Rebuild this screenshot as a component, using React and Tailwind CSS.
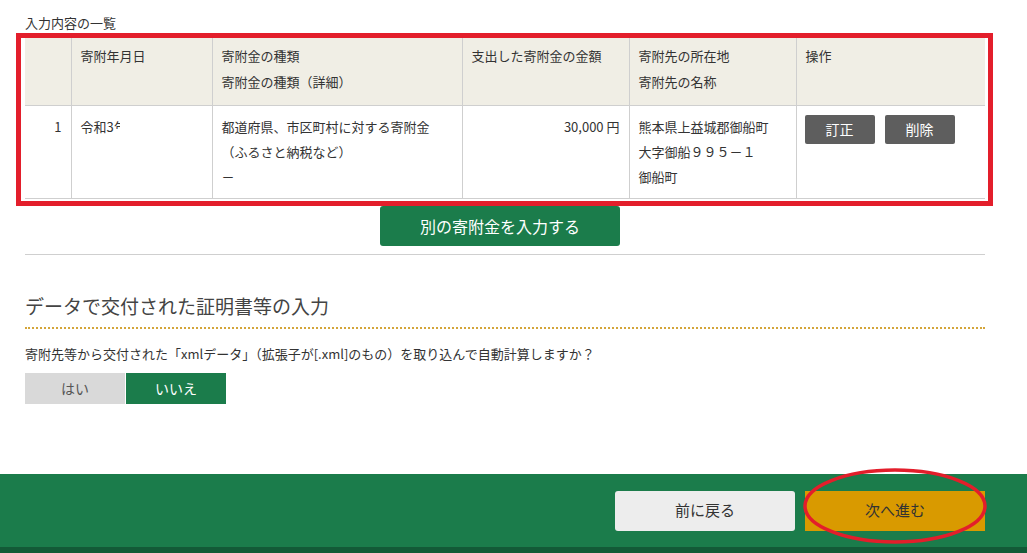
import React from 'react';

const font = { fontFamily: '"Noto Sans CJK JP", "Noto Sans", sans-serif' };

const cols = ['w-[46px]', 'w-[141px]', 'w-[250px]', 'w-[167px]', 'w-[167px]', 'w-[189px]'];

function HeaderCell({ className = '', children }) {
  return (
    <th className={`border-l border-[#cfcfcf] first:border-l-0 px-[9px] pt-[6px] pb-[10px] text-left align-top font-normal leading-[26px] ${className}`}>
      {children}
    </th>
  );
}

function Cell({ className = '', children }) {
  return (
    <td className={`border-l border-[#cfcfcf] first:border-l-0 px-[9px] pt-[8px] pb-[9px] align-top leading-[25px] ${className}`}>
      {children}
    </td>
  );
}

export default function App() {
  return (
    <div style={font} className="w-[1027px] h-[553px] bg-white text-[#333] overflow-hidden flex flex-col">
      <div className="px-[25px] w-[1010px]">
        <p className="pt-[14px] text-[13px] leading-[18px] text-[#333]">入力内容の一覧</p>

        <div className="relative mt-[5px] w-[960px]">
          <table className="w-[960px] table-fixed border-collapse text-[13px]">
            <colgroup>
              {cols.map((c, i) => (
                <col key={i} className={c} />
              ))}
            </colgroup>
            <thead>
              <tr className="bg-[#f0eee5] h-[68px] border-b border-[#cfcfcf]">
                <HeaderCell />
                <HeaderCell>寄附年月日</HeaderCell>
                <HeaderCell>
                  寄附金の種類
                  <br />
                  寄附金の種類（詳細）
                </HeaderCell>
                <HeaderCell>支出した寄附金の金額</HeaderCell>
                <HeaderCell>
                  寄附先の所在地
                  <br />
                  寄附先の名称
                </HeaderCell>
                <HeaderCell>操作</HeaderCell>
              </tr>
            </thead>
            <tbody>
              <tr className="h-[92px] border-b border-[#cfcfcf]">
                <Cell className="text-right">1</Cell>
                <Cell>
                  令和3
                  {/* date is masked in the source, only a sliver of 年 shows */}
                  <span className="inline-block w-[6px] h-[9px] overflow-hidden align-top mt-[6px] leading-[13px]">年</span>
                </Cell>
                <Cell>
                  都道府県、市区町村に対する寄附金
                  <br />
                  （ふるさと納税など）
                  <br />
                  －
                </Cell>
                <Cell className="text-right">30,000 円</Cell>
                <Cell>
                  熊本県上益城郡御船町
                  <br />
                  大字御船９９５－１
                  <br />
                  御船町
                </Cell>
                <td className="border-l border-[#cfcfcf] align-top pl-[8px] pt-[9px]">
                  <div className="flex gap-[10px]">
                    <button className="w-[70px] h-[29px] rounded-[2px] bg-[#5e5e5e] text-white text-[14px]">訂正</button>
                    <button className="w-[70px] h-[29px] rounded-[2px] bg-[#5e5e5e] text-white text-[14px]">削除</button>
                  </div>
                </td>
              </tr>
            </tbody>
          </table>
          {/* annotation frame */}
          <div className="absolute left-[-9px] top-[-4px] right-[-8px] bottom-[-7px] border-[5px] border-[#e31e2b] pointer-events-none" />
        </div>

        <div className="flex w-[960px] mt-[7px] pl-[355px]">
          <button className="w-[240px] h-[40px] rounded-[3px] bg-[#1b7c4b] text-white text-[16px]">別の寄附金を入力する</button>
        </div>

        <div className="w-[960px] border-t border-[#cfcfcf] mt-[8px]" />

        <h2 className="mt-[38px] w-[960px] text-[19px] leading-[26px] text-[#444] pb-[8px] border-b-2 border-dotted border-[#d4a53a]">
          データで交付された証明書等の入力
        </h2>

        <p className="mt-[16px] text-[13px] leading-[18px]">
          寄附先等から交付された「xmlデータ」（拡張子が[.xml]のもの）を取り込んで自動計算しますか？
        </p>

        <div className="flex mt-[10px] text-[14px]">
          <button className="w-[100px] h-[31px] bg-[#d9d9d9] text-[#555]">はい</button>
          <button className="w-[100px] h-[31px] bg-[#1b7c4b] text-white ml-px">いいえ</button>
        </div>
      </div>

      <div className="mt-auto">
        <div className="relative h-[73px] bg-[#1b7c4b] flex justify-end items-center gap-[10px] pr-[42px]">
          <button className="w-[180px] h-[40px] rounded-[3px] bg-[#ededed] text-[#333] text-[15px]">前に戻る</button>
          <button className="w-[180px] h-[40px] bg-[#d99a00] text-[#333] text-[15px]">次へ進む</button>
          <svg className="absolute left-[802px] top-[-7px] pointer-events-none" width="186" height="78" viewBox="0 0 186 78">
            <ellipse cx="93" cy="39" rx="90" ry="36" fill="none" stroke="#e31e2b" strokeWidth="3.5" />
          </svg>
        </div>
        <div className="h-[6px] bg-[#135a37]" />
      </div>
    </div>
  );
}
